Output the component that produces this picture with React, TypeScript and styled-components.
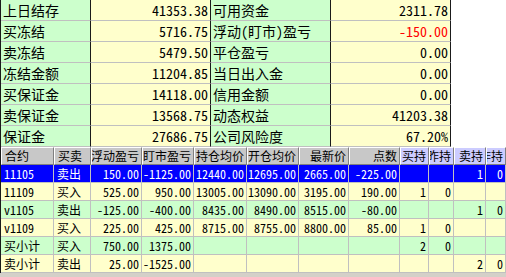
import React from "react";
import styled, { createGlobalStyle } from "styled-components";

const Global = createGlobalStyle`
  html, body { margin: 0; padding: 0; background: #ffffff; overflow: hidden; }
  #root { width: 506px; height: 277px; overflow: hidden; }
`;

const FONT = `"Noto Sans Mono CJK SC", "Noto Sans CJK SC", "Liberation Mono", monospace`;

const GREEN = "#ccffcc";
const YELLOW = "#ffffcc";

const Page = styled.div`
  width: 506px;
  height: 277px;
  display: flex;
  flex-direction: column;
  background: #d4d0c8;
  overflow: hidden;
  font-family: ${FONT};
  color: #000;
`;

const Summary = styled.div`
  display: grid;
  grid-template-columns: 451px 1fr;
  background: #ffffff;
`;

const SummaryGrid = styled.div`
  display: grid;
  grid-template-columns: 90px 120px 120px 120px;
  border-left: 1px solid #1a1a1a;
`;

const SumCell = styled.div<{ $label?: boolean; $red?: boolean }>`
  box-sizing: border-box;
  height: 21px;
  display: flex;
  align-items: center;
  justify-content: ${(p) => (p.$label ? "flex-start" : "flex-end")};
  padding: ${(p) => (p.$label ? "0 0 0 2px" : "0 2px 0 0")};
  background: ${(p) => (p.$label ? GREEN : YELLOW)};
  border-right: 1px solid #1a1a1a;
  border-bottom: 1px solid #c0c0c0;
  font-size: 14px;
  line-height: 14px;
  white-space: nowrap;
  overflow: hidden;
  color: ${(p) => (p.$red ? "#ff0000" : "#000")};
`;

const COLS = "53px 37px 51px 52px 53px 52px 50px 51px 29px 25px 32px 20px";

const Table = styled.div`
  display: flex;
  flex-direction: column;
  border-left: 1px solid #1a1a1a;
  width: 506px;
  box-sizing: border-box;
`;

const Row = styled.div<{ $bg: string; $fg?: string }>`
  display: grid;
  grid-template-columns: ${COLS};
  height: 18px;
  background: ${(p) => p.$bg};
  color: ${(p) => p.$fg || "#000"};
`;

const HeadCell = styled.div<{ $left?: boolean; $blue?: boolean }>`
  box-sizing: border-box;
  display: flex;
  align-items: center;
  justify-content: ${(p) => (p.$left ? "flex-start" : "flex-end")};
  padding: ${(p) => (p.$left ? "0 0 0 3px" : "0 2px 0 0")};
  background: ${(p) => (p.$blue ? "#ccccff" : "#c8c8c8")};
  border-top: 1px solid #ffffff;
  border-left: 1px solid #ffffff;
  border-right: 1px solid #808080;
  border-bottom: 1px solid #808080;
  font-size: 12px;
  line-height: 12px;
  overflow: hidden;
  white-space: nowrap;
`;

const Cell = styled.div<{ $left?: boolean }>`
  box-sizing: border-box;
  display: flex;
  align-items: center;
  justify-content: ${(p) => (p.$left ? "flex-start" : "flex-end")};
  padding: ${(p) => (p.$left ? "0 0 0 3px" : "0 2px 0 0")};
  border-right: 1px solid #c0c0c0;
  border-bottom: 1px solid #c0c0c0;
  font-size: 12px;
  line-height: 12px;
  overflow: hidden;
  white-space: nowrap;
`;

const Txt = styled.span`
  flex-shrink: 0;
`;

const summary: [string, string, string, string, boolean?][] = [
  ["上日结存", "41353.38", "可用资金", "2311.78"],
  ["买冻结", "5716.75", "浮动(盯市)盈亏", "-150.00", true],
  ["卖冻结", "5479.50", "平仓盈亏", "0.00"],
  ["冻结金额", "11204.85", "当日出入金", "0.00"],
  ["买保证金", "14118.00", "信用金额", "0.00"],
  ["卖保证金", "13568.75", "动态权益", "41203.38"],
  ["保证金", "27686.75", "公司风险度", "67.20%"],
];

const headers: { t: string; left?: boolean; blue?: boolean }[] = [
  { t: "合约", left: true },
  { t: "买卖", left: true },
  { t: "浮动盈亏" },
  { t: "盯市盈亏" },
  { t: "持仓均价" },
  { t: "开仓均价" },
  { t: "最新价" },
  { t: "点数" },
  { t: "买持", blue: true },
  { t: "买昨持", blue: true },
  { t: "卖持", blue: true },
  { t: "卖昨持", blue: true },
];

const rows: { c: string[]; bg: string; fg?: string }[] = [
  { c: ["11105", "卖出", "150.00", "-1125.00", "12440.00", "12695.00", "2665.00", "-225.00", "", "", "1", "0"], bg: "#0000ff", fg: "#ffffff" },
  { c: ["11109", "买入", "525.00", "950.00", "13005.00", "13090.00", "3195.00", "190.00", "1", "0", "", ""], bg: YELLOW },
  { c: ["v1105", "卖出", "-125.00", "-400.00", "8435.00", "8490.00", "8515.00", "-80.00", "", "", "1", "0"], bg: GREEN },
  { c: ["v1109", "买入", "225.00", "425.00", "8715.00", "8755.00", "8800.00", "85.00", "1", "0", "", ""], bg: YELLOW },
  { c: ["买小计", "买入", "750.00", "1375.00", "", "", "", "", "2", "0", "", ""], bg: GREEN },
  { c: ["卖小计", "卖出", "25.00", "-1525.00", "", "", "", "", "", "", "2", "0"], bg: YELLOW },
];

export default function App() {
  return (
    <>
      <Global />
      <Page>
        <Summary>
          <SummaryGrid>
            {summary.map(([a, b, c, d, red], i) => (
              <React.Fragment key={i}>
                <SumCell $label>{a}</SumCell>
                <SumCell>{b}</SumCell>
                <SumCell $label>{c}</SumCell>
                <SumCell $red={red}>{d}</SumCell>
              </React.Fragment>
            ))}
          </SummaryGrid>
          <div />
        </Summary>
        <Table>
          <Row $bg="#c8c8c8">
            {headers.map((h, i) => (
              <HeadCell key={i} $left={h.left} $blue={h.blue}>
                <Txt>{h.t}</Txt>
              </HeadCell>
            ))}
          </Row>
          {rows.map((r, i) => (
            <Row key={i} $bg={r.bg} $fg={r.fg}>
              {r.c.map((v, j) => (
                <Cell key={j} $left={j < 2}>
                  <Txt>{v}</Txt>
                </Cell>
              ))}
            </Row>
          ))}
        </Table>
      </Page>
    </>
  );
}
